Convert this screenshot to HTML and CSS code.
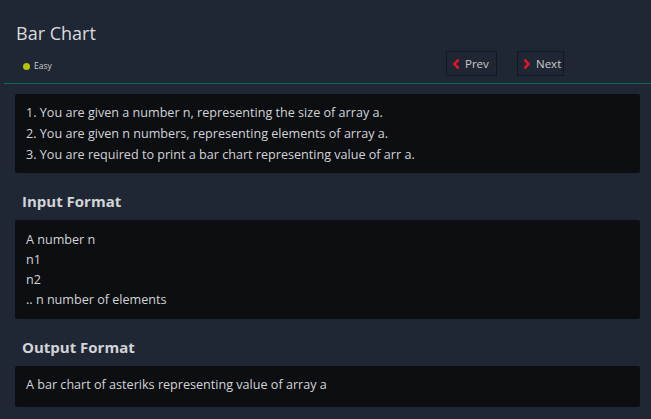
FILE: index.html
```html
<!DOCTYPE html>
<html>
<head>
<meta charset="utf-8">
<link rel="stylesheet" href="styles.css">
</head>
<body>
<div class="page">
  <header class="head">
    <div class="head-left">
      <h1 class="title">Bar Chart</h1>
      <div class="level"><span class="dot"></span><span class="level-text">Easy</span></div>
    </div>
    <nav class="nav">
      <button class="navbtn prev"><svg class="chev" width="8" height="12" viewBox="0 0 8 12"><path d="M6.5 1.5 L2.5 6 L6.5 10.5" fill="none" stroke="#ee1222" stroke-width="2.6"/></svg>Prev</button>
      <button class="navbtn next"><svg class="chev" width="8" height="12" viewBox="0 0 8 12"><path d="M1.5 1.5 L5.5 6 L1.5 10.5" fill="none" stroke="#ee1222" stroke-width="2.6"/></svg>Next</button>
    </nav>
  </header>
  <div class="rule"></div>
  <main class="content">
    <div class="box box-desc">
      <p>1. You are given a number n, representing the size of array a.</p>
      <p>2. You are given n numbers, representing elements of array a.</p>
      <p>3. You are required to print a bar chart representing value of arr a.</p>
    </div>
    <h2 class="section">Input Format</h2>
    <div class="box box-in">
      <p>A number n</p>
      <p>n1</p>
      <p>n2</p>
      <p>.. n number of elements</p>
    </div>
    <h2 class="section">Output Format</h2>
    <div class="box box-out">
      <p>A bar chart of asteriks representing value of array a</p>
    </div>
  </main>
</div>
</body>
</html>
```

FILE: styles.css
```css
* { box-sizing: border-box; }
html, body { margin: 0; padding: 0; }
body {
  background: #1f2734;
  font-family: "Open Sans", "Noto Sans", sans-serif;
  color: #d6d8db;
  width: 651px;
  height: 419px;
  overflow: hidden;
}
.page { display: flex; flex-direction: column; }
.head {
  display: flex;
  justify-content: space-between;
  align-items: flex-start;
  padding: 0 87px 0 16px;
  height: 83px;
}
.head-left { display: flex; flex-direction: column; }
.title {
  margin: 20px 0 0 0;
  font-size: 18px;
  font-weight: 400;
  line-height: 26px;
  color: #d9dbde;
}
.level {
  display: flex;
  align-items: center;
  margin: 15px 0 0 7px;
  gap: 4px;
}
.dot {
  width: 7px; height: 7px;
  border-radius: 50%;
  background: #b4c400;
}
.level-text { font-size: 8.5px; color: #c9cbcf; line-height: 10px; }
.nav { display: flex; gap: 20px; margin-top: 51px; }
.navbtn {
  display: flex; align-items: center; gap: 5px;
  height: 25px;
  padding: 0 0 0 5px;
  background: transparent;
  border: 1px solid #121821;
  color: #c8cacd;
  font-family: "Open Sans", "Noto Sans", sans-serif;
  font-size: 11.5px;
}
.prev { width: 51px; }
.next { width: 47px; }
.rule { height: 1px; background: #12625f; margin-left: 4px; }
.content { padding: 10px 11px 0 15px; display: flex; flex-direction: column; }
.box {
  background: #0c0e12;
  border-radius: 2px;
  padding: 0 11px;
  font-size: 12.6px;
  color: #d2d4d7;
}
.box p { margin: 0; }
.box-desc { height: 79px; padding-top: 8px; line-height: 21px; }
.box-in { height: 99px; padding-top: 10px; line-height: 20px; }
.box-out { height: 41px; padding-top: 9px; line-height: 20px; }
.section {
  margin: 0;
  padding: 19px 7px 0;
  font-size: 15px;
  font-weight: 700;
  color: #d2d4d7;
  height: 47px;
  line-height: 18px;
}
```
